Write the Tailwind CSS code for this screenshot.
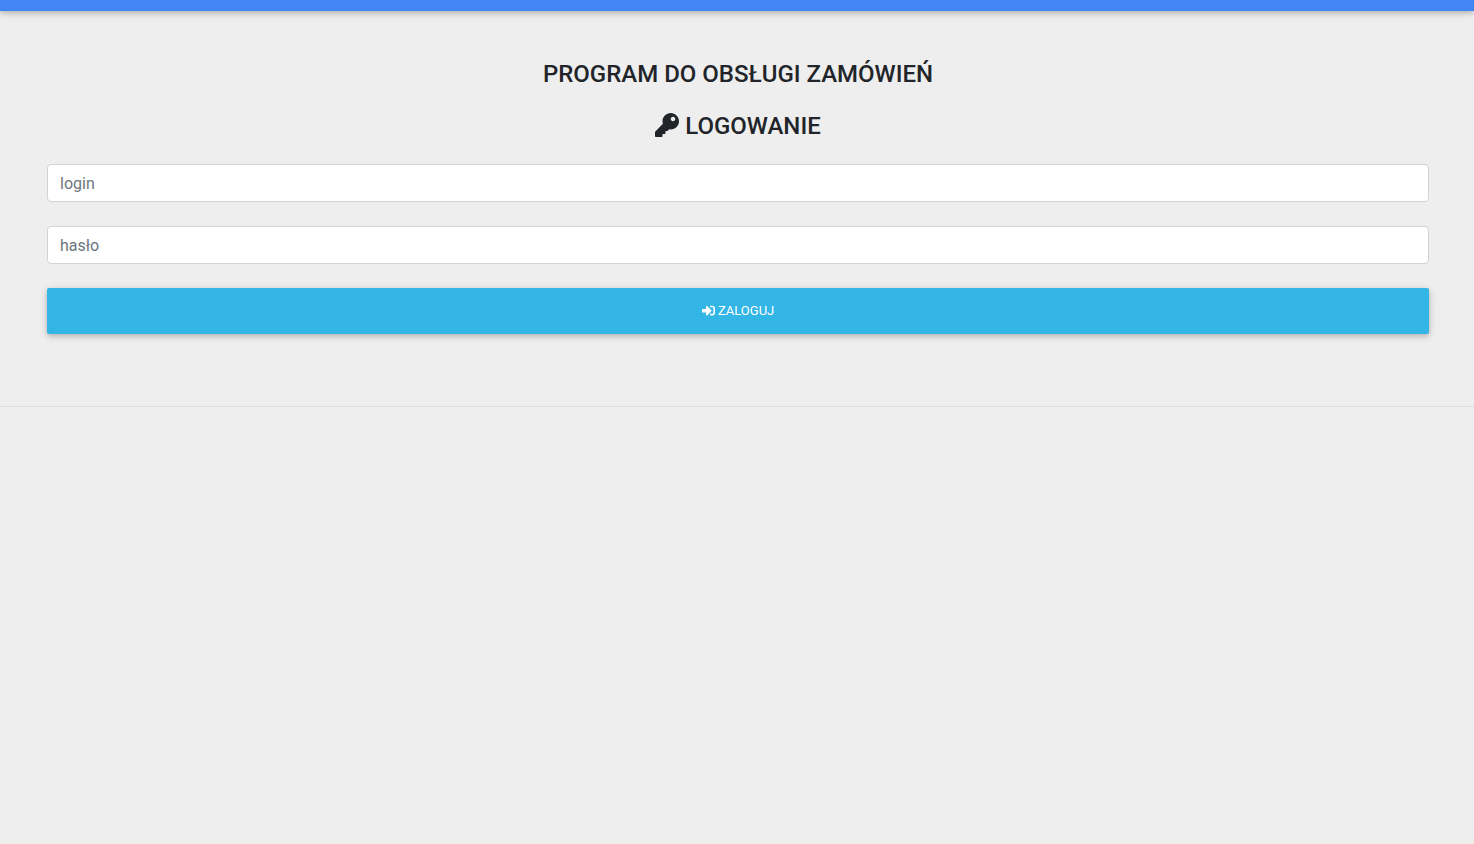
<!DOCTYPE html>
<html lang="pl">
<head>
  <meta charset="UTF-8" />
  <meta name="viewport" content="width=device-width, initial-scale=1.0"/>
  <title>Logowanie</title>
  <script src="https://cdn.jsdelivr.net/npm/@tailwindcss/browser@4"></script>
</head>
<body class="bg-[#eeeeee] min-h-screen text-[#212529] font-['Roboto',sans-serif]">

  <!-- Navbar -->
  <header class="relative h-[11px] bg-[#4285f4] shadow-[0_2px_5px_0_rgba(0,0,0,0.16),0_2px_10px_0_rgba(0,0,0,0.12)]"></header>

  <!-- Login -->
  <main class="pt-[49px] pb-[72px] pl-[47px] pr-[45px] border-b border-[#dcdcdc]">
    <h1 class="mb-6 text-center text-2xl leading-7 font-medium">PROGRAM DO OBSŁUGI ZAMÓWIEŃ</h1>
    <form class="flex flex-col gap-6">
      <h2 class="text-center text-2xl leading-7 font-medium">
        <svg class="inline-block w-6 h-6 align-[-3px]" viewBox="0 0 512 512" fill="currentColor" aria-hidden="true">
          <path d="M512 176.001C512 273.203 433.202 352 336 352c-11.22 0-22.19-1.062-32.827-3.069l-24.012 27.014A23.999 23.999 0 0 1 261.223 384H224v40c0 13.255-10.745 24-24 24h-40v40c0 13.255-10.745 24-24 24H24c-13.255 0-24-10.745-24-24v-78.059c0-6.365 2.529-12.47 7.029-16.971l161.802-161.802C163.108 213.814 160 195.271 160 176 160 78.798 238.797.001 335.999 0 433.488-.001 512 78.511 512 176.001zM336 128c0 26.51 21.49 48 48 48s48-21.49 48-48-21.49-48-48-48-48 21.49-48 48z" />
        </svg>
        LOGOWANIE
      </h2>
      <input type="text" name="login" aria-label="login" placeholder="login" class="w-full h-[38px] px-3 rounded border border-[#ced4da] bg-white text-base text-[#495057] placeholder:text-[#6c757d]">
      <input type="password" name="password" aria-label="hasło" placeholder="hasło" class="w-full h-[38px] px-3 rounded border border-[#ced4da] bg-white text-base text-[#495057] placeholder:text-[#6c757d]">
      <button type="submit" class="w-full h-[46px] rounded-xs bg-[#33b5e5] text-white text-center text-[13px] shadow-[0_2px_5px_0_rgba(0,0,0,0.16),0_2px_10px_0_rgba(0,0,0,0.12)] cursor-pointer">
        <svg class="inline-block w-[13px] h-[13px] align-[-2px]" viewBox="0 0 512 512" fill="currentColor" aria-hidden="true">
          <path d="M416 448h-84c-6.6 0-12-5.4-12-12v-40c0-6.6 5.4-12 12-12h84c17.7 0 32-14.3 32-32V160c0-17.7-14.3-32-32-32h-84c-6.6 0-12-5.4-12-12V76c0-6.6 5.4-12 12-12h84c53 0 96 43 96 96v192c0 53-43 96-96 96zm-47-201L201 79c-15-15-41-4.5-41 17v96H24c-13.3 0-24 10.7-24 24v96c0 13.3 10.7 24 24 24h136v96c0 21.5 26 32 41 17l168-168c9.3-9.4 9.3-24.6 0-34z" />
        </svg>
        ZALOGUJ
      </button>
    </form>
  </main>

</body>
</html>
